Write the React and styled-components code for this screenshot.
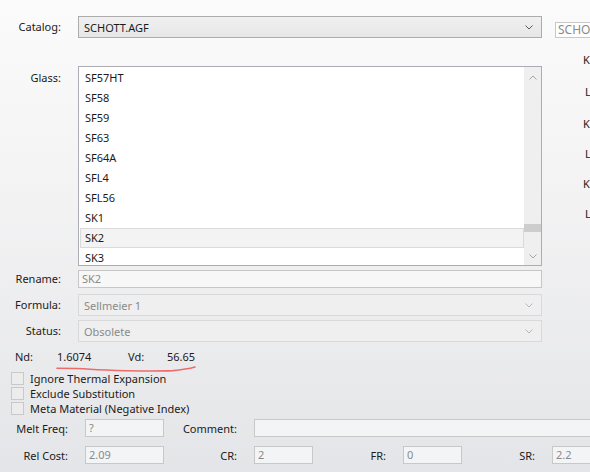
import React from 'react';
import styled, { createGlobalStyle, css } from 'styled-components';

const GlobalStyle = createGlobalStyle`
  html, body { margin: 0; padding: 0; }
  body {
    font-family: "Noto Sans", "Open Sans", sans-serif;
    font-size: 11px;
    color: #1b1b1b;
  }
`;

// whole dialog surface
const Page = styled.div`
  width: 590px;
  height: 472px;
  box-sizing: border-box;
  overflow: hidden;
  padding-top: 16px;
  background: linear-gradient(to bottom, #fbfbfb 0%, #f2f2f3 45%, #e4e5e8 100%);
`;

const Top = styled.div`
  display: flex;
`;

const Form = styled.div`
  width: 542px;
  flex: none;
  display: flex;
  flex-direction: column;
`;

const FieldRow = styled.div`
  display: grid;
  grid-template-columns: 61px 464px;
  column-gap: 17px;
  margin-top: ${p => p.$mt || 0}px;
  align-items: ${p => (p.$top ? 'start' : 'center')};
`;

const Label = styled.div`
  text-align: right;
  white-space: nowrap;
  line-height: 16px;
  padding-top: ${p => p.$pt || 0}px;
`;

const Combo = styled.div`
  height: 22px;
  box-sizing: border-box;
  display: flex;
  align-items: center;
  justify-content: space-between;
  padding: 0 8px 0 5px;
  border: 1px solid ${p => (p.$disabled ? '#d9d9d9' : '#acacac')};
  background: ${p => (p.$disabled ? '#efefef' : 'linear-gradient(#f0f0f0, #e6e6e6)')};
  color: ${p => (p.$disabled ? '#8a8a8a' : '#1b1b1b')};
`;

const TextBox = styled.div`
  height: 18px;
  box-sizing: border-box;
  padding-left: 3px;
  line-height: 16px;
  border: 1px solid #c6c6c6;
  background: #f7f7f7;
  color: #8a8a8a;
`;

const List = styled.div`
  height: 200px;
  box-sizing: border-box;
  border: 1px solid #abadb3;
  background: #fff;
  display: flex;
  overflow: hidden;
`;

const Items = styled.div`
  flex: 1;
  padding: 1px 0 0 1px;
`;

const Item = styled.div`
  height: 20px;
  line-height: 20px;
  box-sizing: border-box;
  padding-left: 5px;
  ${p =>
    p.$selected &&
    css`
      background: #f3f3f3;
      border: 1px solid #dadada;
      line-height: 18px;
      padding-left: 4px;
    `}
`;

const ScrollBar = styled.div`
  width: 17px;
  flex: none;
  background: #efefef;
  display: flex;
  flex-direction: column;
`;

const ArrowBtn = styled.div`
  height: 17px;
  display: flex;
  align-items: center;
  justify-content: center;
  padding-top: ${p => p.$pt || 0}px;
  box-sizing: border-box;
  color: #a6a6a6;
`;

const Track = styled.div`
  flex: 1;
`;

const Thumb = styled.div`
  height: 8px;
  margin-top: ${p => p.$offset}px;
  background: #cdcdcd;
`;

const NdRow = styled.div`
  position: relative;
  display: flex;
  margin-top: 7px;
  padding-left: 15px;
  line-height: 16px;
`;

const Cell = styled.span`
  width: ${p => p.$w}px;
  flex: none;
`;

const Squiggle = styled.svg`
  position: absolute;
  left: 55px;
  top: 15px;
  overflow: visible;
`;

const Checks = styled.div`
  display: flex;
  flex-direction: column;
  padding-left: 11px;
  margin-top: 6px;
`;

const CheckRow = styled.div`
  display: flex;
  align-items: center;
  gap: 6px;
  height: 15px;
  line-height: 15px;
  white-space: nowrap;
`;

const Box = styled.span`
  width: 13px;
  height: 13px;
  box-sizing: border-box;
  border: 1px solid #c9c9c9;
  background: #ececec;
  flex: none;
`;

const BottomRow = styled.div`
  display: flex;
  align-items: center;
  height: 18px;
  margin-top: ${p => p.$mt}px;
`;

const FLabel = styled.span`
  width: ${p => p.$w}px;
  flex: none;
  text-align: right;
  margin-right: 17px;
  white-space: nowrap;
`;

const Input = styled.div`
  height: 18px;
  box-sizing: border-box;
  padding-left: 3px;
  line-height: 16px;
  border: 1px solid #c8c8c8;
  background: #f3f4f6;
  color: #8a8a8a;
  ${p =>
    p.$grow
      ? css`
          flex: 1 0 auto;
          margin-right: -20px;
        `
      : css`
          flex: none;
          width: ${p.$w}px;
        `}
`;

const Side = styled.div`
  margin-left: 13px;
  flex: 1;
  min-width: 0;
  display: flex;
  flex-direction: column;
  overflow: hidden;
`;

const SideBox = styled.div`
  margin-top: 6px;
  height: 16px;
  width: 80px;
  box-sizing: border-box;
  padding-left: 2px;
  line-height: 14px;
  border: 1px solid #c8c8c8;
  background: #fff;
  color: #8a8a8a;
  overflow: hidden;
  white-space: nowrap;
  font-size: 12px;
`;

const SideLabel = styled.div`
  line-height: 16px;
  margin-top: ${p => p.$mt}px;
  padding-left: ${p => p.$indent}px;
  white-space: nowrap;
`;

const Chevron = ({ up, color = 'currentColor' }) => (
  <svg width="8" height="5" viewBox="0 0 8 5">
    <path
      d={up ? 'M0.5 4.5 L4 1 L7.5 4.5' : 'M0.5 0.5 L4 4 L7.5 0.5'}
      fill="none"
      stroke={color}
      strokeWidth="1"
    />
  </svg>
);

const glasses = ['SF57HT', 'SF58', 'SF59', 'SF63', 'SF64A', 'SFL4', 'SFL56', 'SK1', 'SK2', 'SK3'];

const sideLabels = [
  { t: 'K', mt: 14, indent: 28 },
  { t: 'L', mt: 16, indent: 30 },
  { t: 'K', mt: 16, indent: 28 },
  { t: 'L', mt: 14, indent: 30 },
  { t: 'K', mt: 14, indent: 28 },
  { t: 'L', mt: 14, indent: 30 },
];

export default function App() {
  return (
    <>
      <GlobalStyle />
      <Page>
        <Top>
          <Form>
            <FieldRow>
              <Label>Catalog:</Label>
              <Combo>
                <span>SCHOTT.AGF</span>
                <Chevron color="#5a5a5a" />
              </Combo>
            </FieldRow>

            <FieldRow $mt={28} $top>
              <Label $pt={4}>Glass:</Label>
              <List>
                <Items>
                  {glasses.map(g => (
                    <Item key={g} $selected={g === 'SK2'}>
                      {g}
                    </Item>
                  ))}
                </Items>
                <ScrollBar>
                  <ArrowBtn $pt={4}>
                    <Chevron up />
                  </ArrowBtn>
                  <Track>
                    <Thumb $offset={140} />
                  </Track>
                  <ArrowBtn>
                    <Chevron />
                  </ArrowBtn>
                </ScrollBar>
              </List>
            </FieldRow>

            <FieldRow $mt={4}>
              <Label>Rename:</Label>
              <TextBox>SK2</TextBox>
            </FieldRow>

            <FieldRow $mt={6}>
              <Label>Formula:</Label>
              <Combo $disabled>
                <span>Sellmeier 1</span>
                <Chevron color="#b8b8b8" />
              </Combo>
            </FieldRow>

            <FieldRow $mt={4}>
              <Label>Status:</Label>
              <Combo $disabled>
                <span>Obsolete</span>
                <Chevron color="#b8b8b8" />
              </Combo>
            </FieldRow>
          </Form>

          <Side>
            <SideBox>SCHOTT.AGF</SideBox>
            {sideLabels.map((s, i) => (
              <SideLabel key={i} $mt={s.mt} $indent={s.indent}>
                {s.t}
              </SideLabel>
            ))}
          </Side>
        </Top>

        <NdRow>
          <Cell $w={42}>Nd:</Cell>
          <Cell $w={71}>1.6074</Cell>
          <Cell $w={39}>Vd:</Cell>
          <Cell $w={40}>56.65</Cell>
          <Squiggle width="142" height="8" viewBox="0 0 142 8">
            <path
              d="M2 4.3 C15 4.4 28 4.8 35 5.3 S60 6.5 72 6.7 S110 6.9 118 6.6 C124 6.2 128 5.2 132 4.8 S138 3.6 140 3"
              fill="none"
              stroke="#ee6b6b"
              strokeWidth="1.6"
              strokeLinecap="round"
            />
          </Squiggle>
        </NdRow>

        <Checks>
          <CheckRow>
            <Box />
            <span>Ignore Thermal Expansion</span>
          </CheckRow>
          <CheckRow>
            <Box />
            <span>Exclude Substitution</span>
          </CheckRow>
          <CheckRow>
            <Box />
            <span>Meta Material (Negative Index)</span>
          </CheckRow>
        </Checks>

        <BottomRow $mt={3}>
          <FLabel $w={68}>Melt Freq:</FLabel>
          <Input $w={79}>?</Input>
          <FLabel $w={73}>Comment:</FLabel>
          <Input $grow />
        </BottomRow>

        <BottomRow $mt={9}>
          <FLabel $w={68}>Rel Cost:</FLabel>
          <Input $w={79}>2.09</Input>
          <FLabel $w={73}>CR:</FLabel>
          <Input $w={59}>2</Input>
          <FLabel $w={73}>FR:</FLabel>
          <Input $w={59}>0</Input>
          <FLabel $w={73}>SR:</FLabel>
          <Input $w={59}>2.2</Input>
        </BottomRow>
      </Page>
    </>
  );
}
